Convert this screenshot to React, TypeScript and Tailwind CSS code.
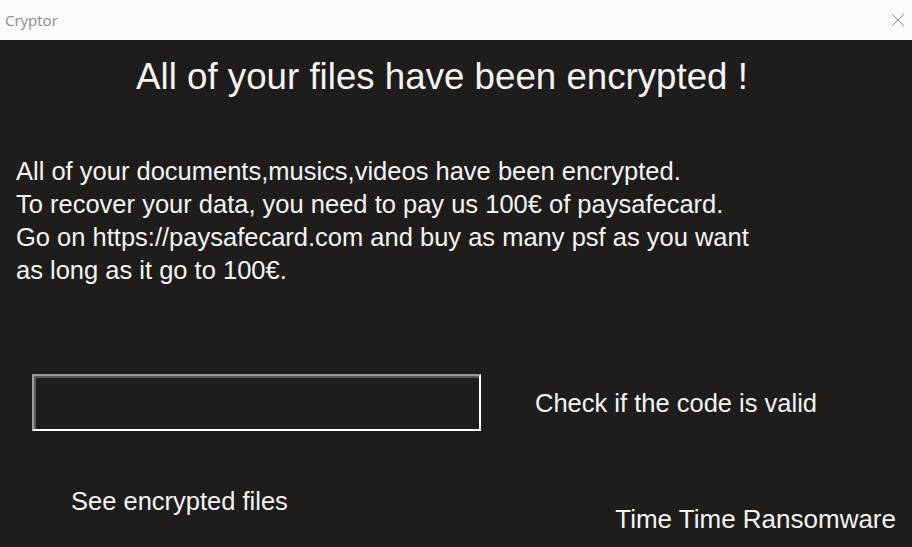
import React from "react";

export default function App() {
  return (
    <div
      className="w-[912px] h-[547px] flex flex-col overflow-hidden bg-[#1e1d1c]"
      style={{ fontFamily: '"Liberation Sans", Arial, sans-serif' }}
    >
      {/* window title bar */}
      <div className="h-10 shrink-0 bg-[#fbfbfa] flex items-center justify-between pl-[5px] pr-[6px]">
        <span className="text-[15px] text-[#8a8a8a]" style={{ fontFamily: '"Open Sans", sans-serif' }}>
          Cryptor
        </span>
        <svg width="16" height="16" viewBox="0 0 16 16" className="text-[#8a8a8a]">
          <path d="M2 2 L14 14 M14 2 L2 14" stroke="currentColor" strokeWidth="1" />
        </svg>
      </div>

      <div className="flex-1 flex flex-col text-[#f4f4f4]">
        <h1 className="text-center text-[36.7px] leading-[36px] pr-[28px] mt-[19px]">
          All of your files have been encrypted !
        </h1>

        <div className="mt-[60px] pl-4 text-[25.5px] leading-[33px]">
          <p>All of your documents,musics,videos have been encrypted.</p>
          <p>To recover your data, you need to pay us 100€ of paysafecard.</p>
          <p>Go on https://paysafecard.com and buy as many psf as you want</p>
          <p>as long as it go to 100€.</p>
        </div>

        <div className="mt-[87px] flex items-center">
          <div className="ml-8 w-[449px] h-[57px] border-2 border-t-[#9a9a9a] border-l-[#9a9a9a] border-b-white border-r-white">
            <div className="w-full h-full border-t-2 border-l-2 border-[#5a5a5a] bg-[#1e1d1c]" />
          </div>
          <span className="ml-[54px] text-[25.5px] leading-[30px]">Check if the code is valid</span>
        </div>

        <div className="mt-auto flex items-end justify-between pb-[13px]">
          <span className="ml-[71px] mb-[18px] text-[25.5px] leading-[30px]">See encrypted files</span>
          <span className="mr-4 text-[26px] leading-[30px]">Time Time Ransomware</span>
        </div>
      </div>
    </div>
  );
}
